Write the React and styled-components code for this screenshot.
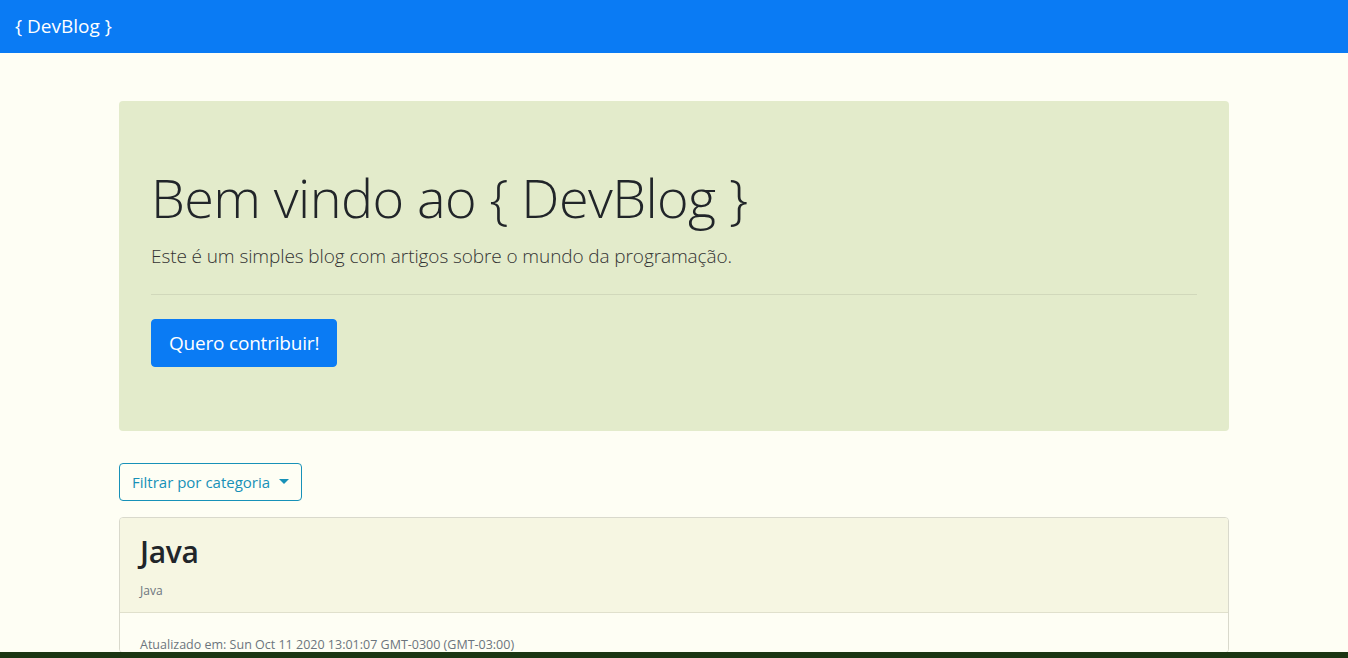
import React from 'react';
import styled, { createGlobalStyle } from 'styled-components';

const GlobalStyle = createGlobalStyle`
  html, body {
    margin: 0;
    padding: 0;
    overflow: hidden;
  }

  body {
    background: #fefef4;
    color: #212529;
    font-family: "Open Sans", "Noto Sans", sans-serif;
    font-size: 16px;
    line-height: 1.5;
  }

  * {
    box-sizing: border-box;
  }
`;

const Page = styled.div`
  display: flex;
  flex-direction: column;
  height: 100vh;
  overflow: hidden;
`;

const Navbar = styled.nav`
  display: flex;
  align-items: center;
  flex: 0 0 53px;
  padding: 0 16px 0 15px;
  background: #0a7bf4;
`;

const Brand = styled.a`
  color: #fff;
  font-size: 19px;
  line-height: 1.5;
  text-decoration: none;
  margin-top: -1px;
`;

const Main = styled.main`
  flex: 1;
  overflow: hidden;
`;

const Container = styled.div`
  width: 1110px;
  margin: 48px auto 0;
`;

const Jumbotron = styled.section`
  padding: 64px 32px;
  margin-bottom: 32px;
  background: #e3ebcb;
  border-radius: 4px;
`;

const Display = styled.h1`
  margin: 0 0 11px;
  font-size: 54px;
  font-weight: 300;
  line-height: 1.2;
  letter-spacing: -0.6px;
  color: #212529;
`;

const Lead = styled.p`
  margin: 0;
  font-size: 19px;
  font-weight: 300;
  line-height: 30px;
  color: #333;
  letter-spacing: -0.1px;
`;

const Rule = styled.hr`
  margin: 23px 0 24px;
  border: 0;
  border-top: 1px solid rgba(0, 0, 0, 0.08);
`;

const PrimaryButton = styled.a`
  display: inline-block;
  padding: 8px 17px;
  font-size: 19px;
  line-height: 30px;
  letter-spacing: -0.2px;
  color: #fff;
  background: #0a7bf4;
  border: 1px solid #0a7bf4;
  border-radius: 4px;
  text-decoration: none;
  vertical-align: top;
`;

const DropdownButton = styled.button`
  display: inline-flex;
  align-items: center;
  height: 38px;
  padding: 0 12px;
  font-family: inherit;
  font-size: 15px;
  color: #1791b8;
  background: transparent;
  border: 1px solid #1791b8;
  border-radius: 4px;

  &::after {
    content: '';
    display: inline-block;
    margin-left: 9px;
    border-top: 5px solid #1791b8;
    border-left: 5px solid transparent;
    border-right: 5px solid transparent;
  }
`;

const Card = styled.article`
  margin-top: 16px;
  border: 1px solid #d9d9cc;
  border-radius: 4px;
  overflow: hidden;
`;

const CardHeader = styled.header`
  padding: 12px 20px 12px;
  height: 95px;
  background: #f6f6e2;
  border-bottom: 1px solid #e0e0cc;
`;

const CardTitle = styled.h2`
  margin: 4px 0 12px;
  font-size: 30px;
  font-weight: 600;
  line-height: 1.2;
  color: #212529;
  letter-spacing: -0.3px;
`;

const Category = styled.small`
  display: block;
  font-size: 12px;
  color: #6c757d;
`;

const CardBody = styled.div`
  padding: 20px 20px 0;
  background: #fefef4;
`;

const Updated = styled.p`
  margin: 5px 0 0;
  font-size: 12.5px;
  line-height: 14px;
  color: #6c757d;
`;

const BottomStrip = styled.div`
  flex: 0 0 6px;
  background: #1b3512;
`;

export default function App() {
  return (
    <Page>
      <GlobalStyle />
      <Navbar>
        <Brand href="#">{'{ DevBlog }'}</Brand>
      </Navbar>
      <Main>
        <Container>
          <Jumbotron>
            <Display>{'Bem vindo ao { DevBlog }'}</Display>
            <Lead>Este é um simples blog com artigos sobre o mundo da programação.</Lead>
            <Rule />
            <PrimaryButton href="#">Quero contribuir!</PrimaryButton>
          </Jumbotron>
          <DropdownButton type="button">Filtrar por categoria</DropdownButton>
          <Card>
            <CardHeader>
              <CardTitle>Java</CardTitle>
              <Category>Java</Category>
            </CardHeader>
            <CardBody>
              <Updated>Atualizado em: Sun Oct 11 2020 13:01:07 GMT-0300 (GMT-03:00)</Updated>
            </CardBody>
          </Card>
        </Container>
      </Main>
      <BottomStrip />
    </Page>
  );
}
